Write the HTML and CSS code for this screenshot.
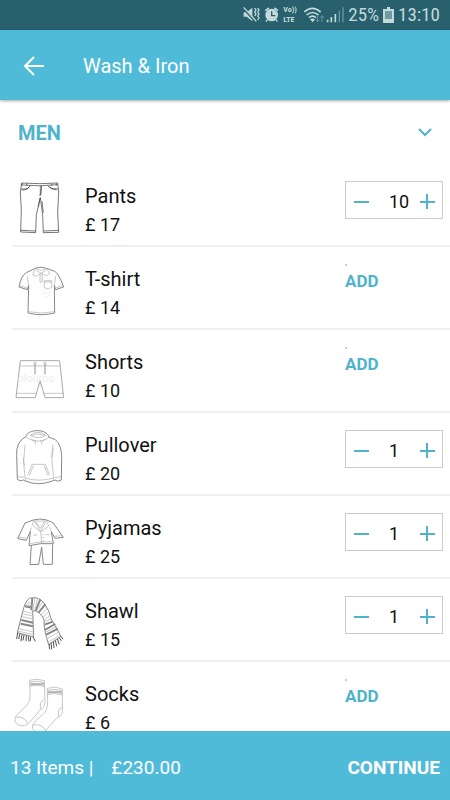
FILE: index.html
```html
<!DOCTYPE html>
<html lang="en">
<head>
    <meta charset="UTF-8">
    <meta name="viewport" content="width=device-width, initial-scale=1.0">
    <title>Wash &amp; Iron</title>
    <link rel="stylesheet" href="styles.css">
</head>
<body>
    <div class="status-bar">
        <svg width="36" height="20" viewBox="0 0 108 60" fill="none" stroke="#c3d9dc" stroke-width="4">
            <!-- muted speaker -->
            <path d="M2 22h9l17-14v41L11 35H2z" fill="#c3d9dc" stroke="none"/>
            <path d="M0 8l38 42" stroke="#28606d" stroke-width="7"/>
            <path d="M2 7l38 42"/>
            <path d="M35 9l4 6-4 6 4 6-4 6M44 9l4 6-4 6 4 6-4 6 4 6-4 6"/>
            <!-- alarm -->
            <circle cx="86" cy="30" r="19" fill="#c3d9dc" stroke="none"/>
            <path d="M67 17l11-8M94 9l11 8" stroke-width="5"/>
            <path d="M86 19v13h11" stroke="#28606d"/>
            <path d="M73 44l-4 6M99 44l4 6"/>
        </svg>
        <div class="volte">
            <div>Vo))</div>
            <div>LTE</div>
        </div>
        <svg width="40" height="20" viewBox="187 0 120 60" fill="none" stroke="#c3d9dc" stroke-width="4">
            <!-- wifi -->
            <path d="M188 21q24-22 49 0M195 30q17-15 35 0M202 38q10-9 21 0" stroke-width="5"/>
            <path d="M205 43q8-5 15 0l-7 9z" fill="#c3d9dc" stroke="none"/>
            <path d="M228 32v18M223 44l5 6 5-6M241 51V32M236 38l5-6 5 6" stroke="#6d949c" stroke-width="3"/>
            <!-- signal -->
            <path d="M258 44v8M269 36v16M281 27v25" stroke-width="5"/>
            <path d="M293 17v35M304 7v45" stroke="#6d949c"/>
        </svg>
        <span class="status-text">25%</span>
        <svg width="11" height="16" viewBox="0 0 11 16">
            <path d="M4 0h3v2h4v14H0V2h4z" fill="#c3d9dc"/>
            <path d="M2 4h7v8H2z" fill="#719ba3"/>
        </svg>
        <span class="status-text">13:10</span>
    </div>

    <header class="app-bar">
        <button class="back-button" aria-label="Back">
            <svg width="24" height="24" viewBox="0 0 24 24" fill="none" stroke="#fff" stroke-width="2">
                <path d="M22 13H3M12 4l-9 9 9 9"/>
            </svg>
        </button>
        <h1>Wash &amp; Iron</h1>
    </header>

    <main class="list">
        <button class="section-title">
            <span>MEN</span>
            <svg width="14" height="10" viewBox="0 0 14 10" fill="none" stroke="#4fb3cb" stroke-width="2">
                <path d="M1 1l6 6 6-6"/>
            </svg>
        </button>

        <ul class="items">
            <li class="item">
                <svg class="picture dark" viewBox="36 9 168 192">
                    <path d="M65 39Q120 43 173 39L176 66 173 129 176 187 130 188 128 136 121 83 109 134 107 188 62 186 64 121 61 66z"/>
                    <path d="M64 45Q120 50 173 44M63 57q24 2 28-12M174 57q-25-1-31-10M65 60q18 0 22-9M170 60q-18-2-22-9M121 47v30M125 48l-2 25-5 3M62 181l45 2M131 183l44-2M120 84l-5 27M126 93l4 35M66 39v7M80 40v7M155 41v6M169 40v6"/>
                </svg>
                <div class="info">
                    <h2>Pants</h2>
                    <p>£ 17</p>
                </div>
                <div class="stepper">
                    <button class="step" aria-label="Remove Pants"><svg width="15" height="15" viewBox="0 0 15 15"><path d="M0 8h15"/></svg></button>
                    <output>10</output>
                    <button class="step" aria-label="Add Pants"><svg width="15" height="15" viewBox="0 0 15 15"><path d="M0 8h15M7 0v15"/></svg></button>
                </div>
            </li>
            <li class="item">
                <svg class="picture" viewBox="36 3 168 192">
                    <path class="outline" d="M108 39Q123 34 139 40L164 49Q176 54 191 96L167 104 163 91 164 174Q124 184 84 174L86 91 82 104 57 96Q63 62 79 53z"/>
                    <path d="M108 39L98 59 109 64 123 55 139 62 149 56 139 40M109 42Q124 51 139 42M110 47L123 55 137 47M120 57V81L127 81V57M123 62v2M123 71v2M133 77h22v21q-11 6-22 1zM133 81h22M58 91l25 9M190 91l-23 8M82 64l4 29M167 64l-4 28M85 170q39 8 78 0"/>
                    <path class="faint" d="M124 108l30-8M125 118l30-8M132 127l24-7M138 97v28M148 95v30"/>
                </svg>
                <div class="info">
                    <h2>T-shirt</h2>
                    <p>£ 14</p>
                </div>
                <div class="add-wrap"><button class="add-button">ADD</button></div>
            </li>
            <li class="item">
                <svg class="picture" viewBox="36 0 168 192">
                    <path d="M61 65H179L191 176H135L120 124 106 176H48z" stroke-width="3"/>
                    <path d="M60 81H180M49 163H109M132 163H190M120 124v15"/>
                    <path d="M105 74v32M135 74v32" stroke-width="4"/>
                    <circle cx="105" cy="74" r="4"/>
                    <circle cx="135" cy="74" r="4"/>
                    <text class="watermark" x="54" y="130">olourbo</text>
                </svg>
                <div class="info">
                    <h2>Shorts</h2>
                    <p>£ 10</p>
                </div>
                <div class="add-wrap"><button class="add-button">ADD</button></div>
            </li>
            <li class="item">
                <svg class="picture" viewBox="36 3 168 192">
                    <path class="outline" d="M77 47C82 24 141 21 147 49L165 55Q184 70 185 107L184 177Q173 184 164 177L157 180Q116 196 76 180L70 177Q61 183 52 175L50 103Q47 64 77 47z"/>
                    <path d="M90 43Q113 25 138 43Q116 57 90 43zM95 43q19-9 38 0M78 48Q92 58 110 60Q132 61 147 49M106 57v14M122 58l4 12M94 54l10 9M136 54l-10 8M75 71L71 123 76 180M159 70L155 106 161 176M83 163L96 130H136L149 163M88 163l12-29M144 163l-12-29M76 171Q116 184 160 171M54 167l18 2M164 170l20-3M69 109l4 24M160 83l-3 25M81 179v5M92 182v4M141 182v4"/>
                </svg>
                <div class="info">
                    <h2>Pullover</h2>
                    <p>£ 20</p>
                </div>
                <div class="stepper">
                    <button class="step" aria-label="Remove Pullover"><svg width="15" height="15" viewBox="0 0 15 15"><path d="M0 8h15"/></svg></button>
                    <output>1</output>
                    <button class="step" aria-label="Add Pullover"><svg width="15" height="15" viewBox="0 0 15 15"><path d="M0 8h15M7 0v15"/></svg></button>
                </div>
            </li>
            <li class="item">
                <svg class="picture" viewBox="36 3 168 192">
                    <path class="outline" d="M100 48L75 57 53 104 79 109 91 82 87 125Q122 116 160 119L154 83 165 103 190 100 159 56 137 47Q119 43 100 48z"/>
                    <path class="outline" d="M94 124L90 182 116 181 125 129 130 181 157 181 158 121"/>
                    <path d="M102 50L122 82 139 50M100 49L98 64 122 84 146 66 139 49M106 50L121 73 135 49M107 50q14 4 27 0M122 84L125 119M56 99l24 4M163 97l24-2M127 92h5M127 101h5M127 111h5M100 93h12M136 92h13M87 119q36-7 73-6M91 82l3-12M154 83l-5-13"/>
                </svg>
                <div class="info">
                    <h2>Pyjamas</h2>
                    <p>£ 25</p>
                </div>
                <div class="stepper">
                    <button class="step" aria-label="Remove Pyjamas"><svg width="15" height="15" viewBox="0 0 15 15"><path d="M0 8h15"/></svg></button>
                    <output>1</output>
                    <button class="step" aria-label="Add Pyjamas"><svg width="15" height="15" viewBox="0 0 15 15"><path d="M0 8h15M7 0v15"/></svg></button>
                </div>
            </li>
            <li class="item">
                <svg class="picture" viewBox="36 0 168 192">
                    <path class="outline" d="M88 31Q115 23 132 45Q149 68 153 92L183 145 146 170Q131 125 132 95Q119 67 98 68L101 147 52 134 67 75Q75 39 88 31z"/>
                    <path class="stripe" d="M75 55l22 4M64 96l35 8M62 107l37 8M97 30l-3 37M121 34l-14 34M136 49l-20 24M134 126l32-18M139 140l35-18M134 110l24-9"/>
                    <path d="M80 44l17 2M77 50l19 3M70 69l26 7M69 78l29 6M67 86l31 7M57 122l43 10M54 129l46 11M104 31l-5 37M112 32l-7 35M128 41l-18 28M143 60l-22 22M147 70l-20 20M150 82l-19 16M133 102l21-10M136 133l35-18M142 151l36-20M145 162l37-21"/>
                    <path class="fringe" d="M53 134l-3 19M60 137l-4 16M66 139l-3 21M72 141l-3 16M79 142l-1 18M85 144l2 17M92 146l-1 13M99 147l7 13M147 168l2 16M153 164l2 20M160 160l2 20M166 157l4 18M172 153l6 16M178 149l6 10M183 145l6 9"/>
                </svg>
                <div class="info">
                    <h2>Shawl</h2>
                    <p>£ 15</p>
                </div>
                <div class="stepper">
                    <button class="step" aria-label="Remove Shawl"><svg width="15" height="15" viewBox="0 0 15 15"><path d="M0 8h15"/></svg></button>
                    <output>1</output>
                    <button class="step" aria-label="Add Shawl"><svg width="15" height="15" viewBox="0 0 15 15"><path d="M0 8h15M7 0v15"/></svg></button>
                </div>
            </li>
            <li class="item">
                <svg class="picture" viewBox="36 6 168 192">
                    <path d="M89 34Q110 27 133 35L135 101Q132 118 121 122L91 158Q75 176 55 168Q39 158 48 141L83 105Q91 95 90 73z"/>
                    <path d="M89 40q22-7 44 1M89 48q22-7 44 1M89 52q22-7 44 1M131 93q-15 7-8 27M47 145q25-5 36 18"/>
                    <path d="M142 58Q165 50 187 60V124Q189 140 171 146L140 181Q128 197 107 189Q91 178 101 162L134 131Q143 121 143 96z"/>
                    <path d="M142 64q23-6 45 2M142 72q23-6 45 2M142 76q23-6 45 2M187 115q-17 4-10 28M99 168q30-5 38 18"/>
                    <path d="M91 45h41M144 69h42" stroke-width="4"/>
                </svg>
                <div class="info">
                    <h2>Socks</h2>
                    <p>£ 6</p>
                </div>
                <div class="add-wrap"><button class="add-button">ADD</button></div>
            </li>
        </ul>
    </main>

    <footer class="cart-bar">
        <span class="count">13 Items |</span>
        <span class="total">£230.00</span>
        <button class="continue-button">CONTINUE</button>
    </footer>
</body>
</html>
```

FILE: styles.css
```css
* {
    margin: 0;
    padding: 0;
    box-sizing: border-box;
}

body {
    font-family: Roboto, "Noto Sans", sans-serif;
    background: #fff;
    color: #111;
    height: 100vh;
    display: flex;
    flex-direction: column;
}

button {
    font-family: inherit;
    background: none;
    border: none;
    cursor: pointer;
}

svg {
    display: block;
}

.status-bar {
    flex: none;
    height: 30px;
    padding-right: 10px;
    background: #28606d;
    color: #c3d9dc;
    display: flex;
    align-items: center;
    justify-content: flex-end;
    gap: 4px;
}

.volte {
    width: 17px;
    font-family: "Roboto Condensed", Roboto, sans-serif;
    font-size: 8px;
    line-height: 10px;
    font-weight: 700;
}

.status-text {
    font-family: "Roboto Condensed", Roboto, sans-serif;
    font-size: 19px;
    line-height: 30px;
}

.app-bar {
    flex: none;
    height: 70px;
    padding-left: 22px;
    background: #50bbd8;
    color: #fff;
    display: flex;
    align-items: center;
    gap: 37px;
    box-shadow: 0 1px 3px rgba(0, 0, 0, 0.35);
    position: relative;
}

.app-bar h1 {
    padding-top: 2px;
    font-size: 20px;
    font-weight: 400;
}

.list {
    flex: 1;
    min-height: 0;
    overflow-y: auto;
    scrollbar-width: none;
}

.section-title {
    width: 100%;
    height: 64px;
    padding: 2px 18px 0;
    display: flex;
    align-items: center;
    justify-content: space-between;
    color: #4fb3cb;
    font-size: 20px;
    font-weight: 700;
}

.items {
    list-style: none;
    padding-left: 12px;
}

.item {
    height: 83px;
    border-bottom: 2px solid #efefef;
    display: flex;
    align-items: flex-start;
}

.picture {
    width: 56px;
    height: 64px;
    margin-top: 9px;
    fill: none;
    stroke: #aaa;
    stroke-width: 2;
}

.picture.dark {
    stroke: #333;
}

.picture .outline {
    stroke: #888;
    stroke-width: 3;
}

.picture .stripe {
    stroke: #888;
    stroke-width: 6;
}

.picture .fringe {
    stroke: #555;
    stroke-width: 3;
}

.picture .faint {
    stroke: #eee;
}

.watermark {
    font-size: 32px;
    fill: #eee;
    stroke: none;
}

.info {
    flex: 1;
    padding: 18px 0 0 17px;
}

.info h2 {
    font-size: 20px;
    line-height: 28px;
    font-weight: 400;
}

.info p {
    font-size: 18px;
    line-height: 30px;
}

.stepper {
    width: 98px;
    height: 38px;
    margin: 17px 7px 0 0;
    padding: 2px 7px 0 8px;
    border: 1px solid #ccc;
    display: flex;
    align-items: center;
}

.step svg {
    fill: none;
    stroke: #4fb3cb;
    stroke-width: 2;
}

.stepper output {
    flex: 1;
    padding-left: 20px;
    font-size: 18px;
}

.add-wrap {
    width: 98px;
    margin: 17px 7px 0 0;
}

.add-wrap::before {
    content: "";
    display: block;
    width: 2px;
    height: 2px;
    background: #ccc;
}

.add-button {
    margin-top: 4px;
    color: #4fb3cb;
    font-size: 17px;
    line-height: 22px;
    font-weight: 700;
}

.cart-bar {
    flex: none;
    height: 69px;
    padding: 4px 10px 0;
    background: #50bbd8;
    color: #fff;
    display: flex;
    align-items: center;
    font-size: 19px;
}

.total {
    margin-left: 18px;
}

.continue-button {
    margin-left: auto;
    color: #fff;
    font-size: 19px;
    font-weight: 700;
}
```
